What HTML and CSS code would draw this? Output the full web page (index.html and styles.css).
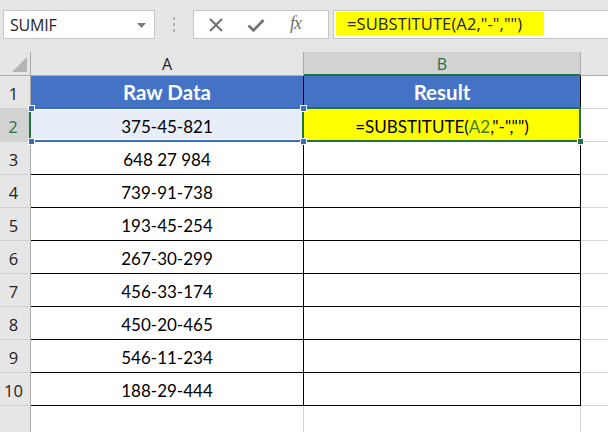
FILE: index.html
```html
<!DOCTYPE html>
<html>
<head>
<meta charset="utf-8">
<link rel="stylesheet" href="styles.css">
</head>
<body>
<div class="toolbar">
  <div class="namebox">
    <span class="name">SUMIF</span>
    <svg class="dd" width="9" height="5" viewBox="0 0 9 5"><path d="M0 0h9L4.5 5z" fill="#7a7a7a"/></svg>
  </div>
  <svg class="grip" width="4" height="16" viewBox="0 0 4 16"><rect x="1" y="0" width="2" height="3" fill="#b4b4b4"/><rect x="1" y="6" width="2" height="3" fill="#b4b4b4"/><rect x="1" y="12" width="2" height="3" fill="#b4b4b4"/></svg>
  <div class="fxbox">
    <svg width="16" height="16" viewBox="0 0 16 16"><path d="M2 2L14 14M14 2L2 14" stroke="#6f6f6f" stroke-width="2" fill="none"/></svg>
    <svg width="18" height="16" viewBox="0 0 18 16"><path d="M1.5 8.5L6.5 13.5L16.5 3" stroke="#6f6f6f" stroke-width="2.6" fill="none"/></svg>
    <span class="fx">fx</span>
  </div>
  <div class="formula">
    <span class="hl">=SUBSTITUTE(A2,"-","")</span>
  </div>
</div>

<div class="sheet">
  <div class="corner"><svg width="16" height="16" viewBox="0 0 16 16"><path d="M16 0V16H0z" fill="#b4b4b4"/></svg></div>
  <div class="colhead">A</div>
  <div class="colhead sel">B</div>
  <div class="colhead last"></div>

  <div class="rowhead">1</div>
  <div class="cell th">Raw Data</div>
  <div class="cell th">Result</div>
  <div class="gap"></div>

  <div class="rowhead sel">2</div>
  <div class="cell a2">375-45-821</div>
  <div class="cell b2">=SUBSTITUTE(<span class="ref">A2</span>,"-","")</div>
  <div class="gap"></div>

  <div class="rowhead">3</div>
  <div class="cell">648 27 984</div>
  <div class="cell"></div>
  <div class="gap"></div>

  <div class="rowhead">4</div>
  <div class="cell">739-91-738</div>
  <div class="cell"></div>
  <div class="gap"></div>

  <div class="rowhead">5</div>
  <div class="cell">193-45-254</div>
  <div class="cell"></div>
  <div class="gap"></div>

  <div class="rowhead">6</div>
  <div class="cell">267-30-299</div>
  <div class="cell"></div>
  <div class="gap"></div>

  <div class="rowhead">7</div>
  <div class="cell">456-33-174</div>
  <div class="cell"></div>
  <div class="gap"></div>

  <div class="rowhead">8</div>
  <div class="cell">450-20-465</div>
  <div class="cell"></div>
  <div class="gap"></div>

  <div class="rowhead">9</div>
  <div class="cell">546-11-234</div>
  <div class="cell"></div>
  <div class="gap"></div>

  <div class="rowhead">10</div>
  <div class="cell">188-29-444</div>
  <div class="cell"></div>
  <div class="gap"></div>

  <div class="rowhead"></div>
  <div class="blank"></div>
  <div class="blank"></div>
  <div class="gap"></div>

  <div class="refbox"></div>
  <div class="active"></div>
  <span class="handle blue h1"></span>
  <span class="handle blue h2"></span>
  <span class="handle blue h3"></span>
  <span class="handle blue h4"></span>
  <span class="handle green h5"></span>
</div>
</body>
</html>
```

FILE: styles.css
```css
* { box-sizing: border-box; }
html, body { margin: 0; padding: 0; }
body {
  width: 608px;
  height: 432px;
  overflow: hidden;
  background: #fff;
  font-family: "Open Sans", "Noto Sans", sans-serif;
}

.toolbar {
  height: 52px;
  background: #e6e6e6;
  display: flex;
  align-items: flex-start;
  padding: 10px 0 0 3px;
}

.namebox {
  width: 152px;
  height: 29px;
  background: #fff;
  border: 1px solid #c6c6c6;
  display: flex;
  align-items: center;
  justify-content: space-between;
  padding: 0 8px 0 6px;
}
.name { font-size: 16px; color: #262626; letter-spacing: -0.2px; }
.dd { margin-top: 1px; }

.grip { margin: 7px 0 0 17px; }

.fxbox {
  margin-left: 17px;
  width: 136px;
  height: 29px;
  background: #fff;
  border: 1px solid #c6c6c6;
  display: flex;
  align-items: center;
  padding: 0 0 0 14px;
}
.fxbox svg:first-child { margin-right: 23px; }
.fxbox svg:nth-child(2) { margin-right: 25px; }
.fx {
  font-family: "Liberation Serif", "DejaVu Serif", serif;
  font-style: italic;
  font-size: 18px;
  color: #6f6f6f;
  letter-spacing: -1px;
  margin-top: -2px;
}

.formula {
  margin-left: 4px;
  flex: 1;
  height: 29px;
  background: #fff;
  border: 1px solid #c6c6c6;
  border-right: none;
  padding: 1px 0 0 2px;
}
.hl {
  display: flex;
  align-items: center;
  width: 208px;
  height: 23px;
  background: #ffff00;
  padding-left: 11px;
  font-size: 16.5px;
  color: #222;
  letter-spacing: 0.1px;
}

.sheet {
  position: relative;
  display: grid;
  grid-template-columns: 31px 273px 277px 27px;
  grid-template-rows: 24px repeat(11, 33px);
}

.corner {
  background: #e6e6e6;
  border-right: 1px solid #ababab;
  border-bottom: 1px solid #ababab;
  display: flex;
  align-items: flex-end;
  justify-content: flex-end;
  padding: 0 3px 3px 0;
}
.corner svg { width: 15px; height: 15px; }

.colhead {
  background: #e6e6e6;
  border-right: 1px solid #ababab;
  border-bottom: 1px solid #ababab;
  display: flex;
  align-items: center;
  justify-content: center;
  font-size: 16px;
  color: #222;
  padding-top: 1px;
}
.colhead.sel {
  background: #d2d2d2;
  color: #217346;
  border-bottom: 2px solid #217346;
}
.colhead.last { border-right: none; }

.rowhead {
  background: #e6e6e6;
  border-right: 1px solid #ababab;
  border-bottom: 1px solid #d0d0d0;
  display: flex;
  align-items: flex-end;
  justify-content: center;
  font-size: 16.5px;
  color: #222;
  padding: 0 3px 3px 0;
}
.rowhead.sel {
  background: #d2d2d2;
  color: #217346;
  border-right: 2px solid #217346;
}

.cell {
  border-right: 1px solid #000;
  border-bottom: 1px solid #000;
  display: flex;
  align-items: center;
  justify-content: center;
  font-family: "Lato", "Open Sans", sans-serif;
  font-size: 17px;
  color: #000;
  padding-top: 2px;
}
.cell.th {
  background: #4472c4;
  color: #fff;
  font-weight: bold;
  font-size: 20.5px;
  padding-top: 0;
}
.cell.a2 { background: #e8eef8; }
.cell.b2 { background: #ffff00; }
.ref { color: #3f8030; }

.gap {
  border-bottom: 1px solid #d4d4d4;
}
.blank {
  border-right: 1px solid #d4d4d4;
  border-bottom: 1px solid #d4d4d4;
}

.refbox {
  position: absolute;
  left: 31px;
  top: 55px;
  width: 273px;
  height: 35px;
  border-top: 2px solid #3d6dc1;
  border-bottom: 2px solid #3d6dc1;
  box-shadow: inset 0 1px 0 #fff, inset 0 -1px 0 #fff;
}
.active {
  position: absolute;
  left: 302px;
  top: 55px;
  width: 279px;
  height: 35px;
  border: 2px solid #217346;
}
.handle {
  position: absolute;
  width: 7px;
  height: 7px;
  border: 1px solid #fff;
}
.handle.blue { background: #3d6dc1; }
.handle.green { background: #217346; }
.h1 { left: 28px; top: 53px; }
.h2 { left: 28px; top: 86px; }
.h3 { left: 300px; top: 53px; }
.h4 { left: 300px; top: 86px; }
.h5 { left: 577px; top: 86px; }
```
